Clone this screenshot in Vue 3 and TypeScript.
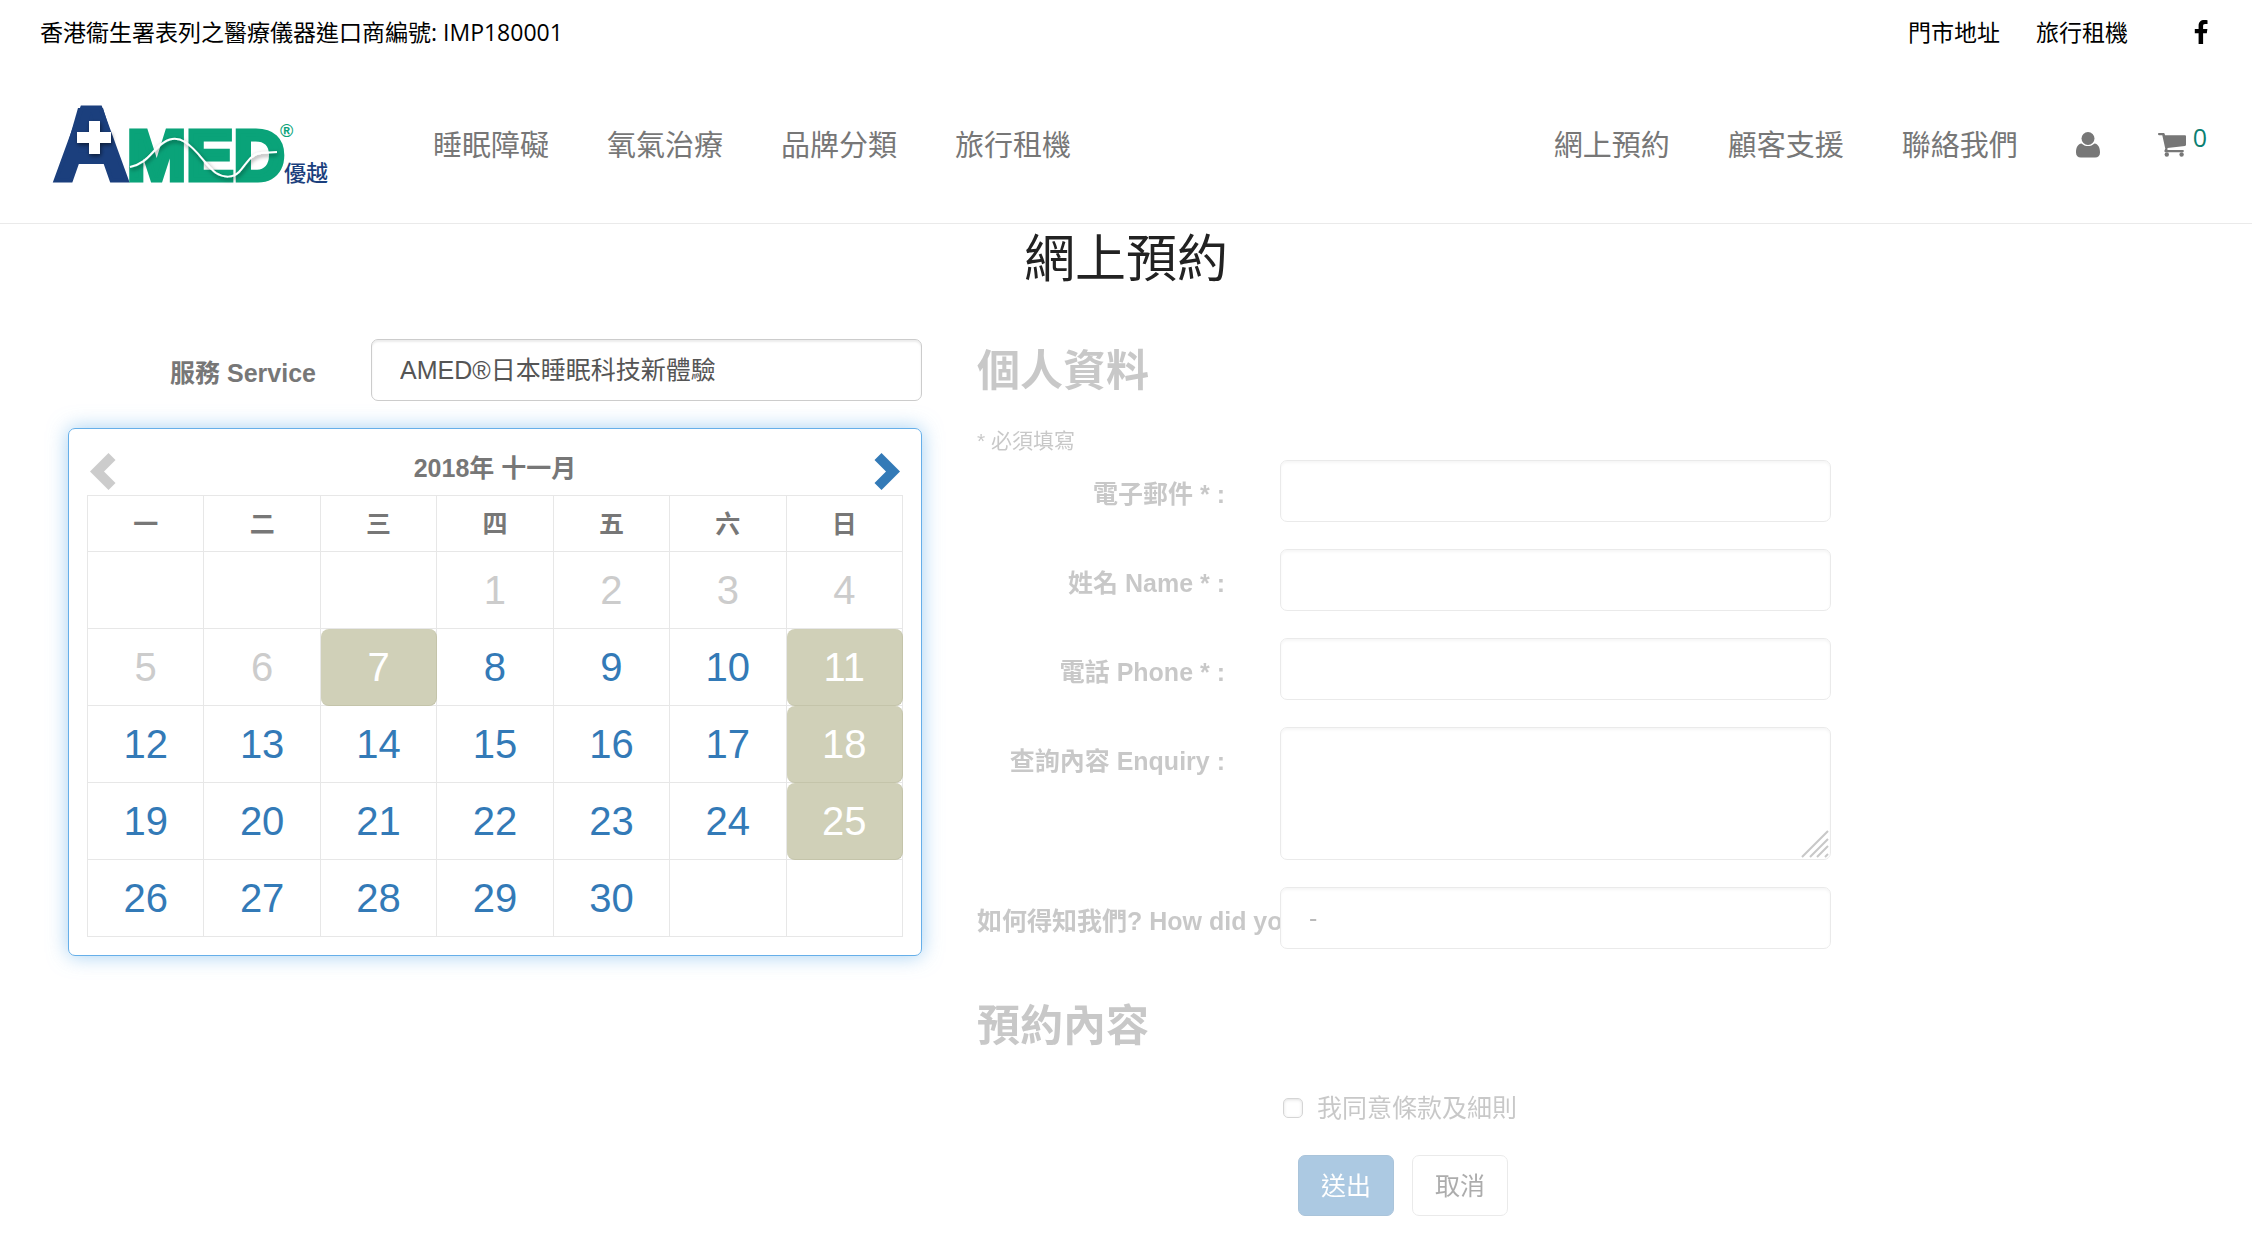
<script setup lang="ts">
import { ref } from 'vue'

interface Day {
  label: number
  state: 'past' | 'open' | 'closed'
}

const leftNav: string[] = ['睡眠障礙', '氧氣治療', '品牌分類', '旅行租機']
const rightNav: string[] = ['網上預約', '顧客支援', '聯絡我們']
const weekdays: string[] = ['一', '二', '三', '四', '五', '六', '日']

const firstOffset = 3
const daysInMonth = 30
const closedDays: number[] = [7, 11, 18, 25]

const weeks: (Day | null)[][] = Array.from({ length: 5 }, (_, week) =>
  Array.from({ length: 7 }, (_, column) => {
    const label = week * 7 + column - firstOffset + 1
    if (label < 1 || label > daysInMonth) return null
    if (closedDays.includes(label)) return { label, state: 'closed' }
    return { label, state: label < 7 ? 'past' : 'open' }
  }),
)

const service = ref('sleep')
const email = ref('')
const fullName = ref('')
const phone = ref('')
const enquiry = ref('')
const source = ref('-')
const agreed = ref(false)
</script>

<template>
  <div class="page" lang="zh-HK">
    <header class="header">
      <div class="topbar">
        <span>香港衞生署表列之醫療儀器進口商編號: IMP180001</span>
        <nav class="topbar-links">
          <a href="#">門市地址</a>
          <a href="#">旅行租機</a>
          <a href="#" class="facebook" aria-label="Facebook">
            <svg width="14" height="24" viewBox="0 0 14 24">
              <path d="M13.5 .2v3.9h-2.3c-1.8 0-2.1.9-2.1 2.1v2.7h4.3l-.6 4.3H9.100V24H4.600V13.200H.8V8.900h3.800V5.700C4.600 2 6.900 0 10.200 0c1.600 0 2.900.1 3.300.2z" />
            </svg>
          </a>
        </nav>
      </div>
      <div class="navbar">
        <a href="#" class="logo" aria-label="AMED 優越">
          <svg width="300" height="140" viewBox="50 75 300 140">
            <defs>
              <filter id="soft" x="-30%" y="-30%" width="170%" height="170%">
                <feDropShadow dx="1" dy="2" stdDeviation="2" flood-opacity="0.55" />
              </filter>
            </defs>
            <path d="M78 108h25l17 56H62z" fill="#1b3f7d" />
            <text class="logo-a" x="53" y="181">A</text>
            <text class="logo-med" x="127" y="180">MED</text>
            <path d="M89 121h11v11h11v11h-11v11H89v-11H77v-11h12z" fill="#fff" filter="url(#soft)" />
            <path
              d="M130 167c14-3 19-11 26-18 9-9 18-14 29-7 13 8 20 23 31 31 8 5 17 5 23-1 7-7 11-18 22-19l16-1"
              fill="none" stroke="#fff" stroke-width="2" filter="url(#soft)"
            />
            <text class="logo-reg" x="280" y="137">®</text>
            <text class="logo-zh" x="284" y="181">優越</text>
          </svg>
        </a>
        <nav class="menu">
          <a v-for="item in leftNav" :key="item" href="#">{{ item }}</a>
        </nav>
        <nav class="menu menu-right">
          <a v-for="item in rightNav" :key="item" href="#">{{ item }}</a>
          <a href="#" class="icon-link" aria-label="帳戶">
            <svg width="24" height="26" viewBox="0 0 24 26">
              <circle cx="12" cy="6.500" r="6.500" />
              <path d="M5.500 11.500c1.800 1.700 4 2.600 6.500 2.600s4.700-.9 6.500-2.600C22.500 12 24 16 24 20.500c0 3.300-2 5.100-4.800 5.100H4.800C2 25.600 0 23.800 0 20.500 0 16 1.500 12 5.500 11.500z" />
            </svg>
          </a>
          <a href="#" class="icon-link cart" aria-label="購物車">
            <svg width="28" height="24" viewBox="0 0 28 24">
              <path d="M1 0h4.500c.8 0 1.200.6 1.300 1.300L7 2.200h19.800c.7 0 1.200.5 1.200 1.100v8.500c0 .6-.4 1-1 1.100L9.400 15c.2.900.2 1.300-.1 2h15.500c1.400 0 1.400 2.200 0 2.200H7.600c-1.100 0-1.500-.9-1.100-1.700l.8-1.700L4.300 2.200H1C-.3 2.200-.3 0 1 0z" />
              <circle cx="8.800" cy="21.500" r="2.200" />
              <circle cx="23.600" cy="21.500" r="2.200" />
            </svg>
            <span class="count">0</span>
          </a>
        </nav>
      </div>
    </header>

    <h1>網上預約</h1>

    <main class="booking">
      <section class="schedule">
        <div class="field">
          <label for="service">服務 Service</label>
          <select id="service" v-model="service" class="control">
            <option value="sleep">AMED®日本睡眠科技新體驗</option>
          </select>
        </div>
        <div class="calendar">
          <div class="calendar-bar">
            <button type="button" class="prev" aria-label="上個月" disabled>
              <svg width="26" height="37" viewBox="0 0 26 37">
                <path d="M0 18.500 18.500 0l7 7L14 18.500l11.500 11.500-7 7z" />
              </svg>
            </button>
            <strong>2018年 十一月</strong>
            <button type="button" class="next" aria-label="下個月">
              <svg width="26" height="37" viewBox="0 0 26 37">
                <path d="M26 18.500 7.500 0l-7 7L12 18.500.5 30l7 7z" />
              </svg>
            </button>
          </div>
          <table>
            <thead>
              <tr>
                <th v-for="day in weekdays" :key="day" scope="col">{{ day }}</th>
              </tr>
            </thead>
            <tbody>
              <tr v-for="(week, w) in weeks" :key="w">
                <td v-for="(day, d) in week" :key="d">
                  <a v-if="day && day.state === 'open'" href="#" class="day">{{ day.label }}</a>
                  <span v-else-if="day" class="day" :class="day.state">{{ day.label }}</span>
                </td>
              </tr>
            </tbody>
          </table>
        </div>
      </section>

      <form class="details" @submit.prevent>
        <h2>個人資料</h2>
        <p class="note">* 必須填寫</p>
        <div class="field">
          <label for="email">電子郵件 * :</label>
          <input id="email" v-model="email" type="email" class="control" />
        </div>
        <div class="field">
          <label for="name">姓名 Name * :</label>
          <input id="name" v-model="fullName" type="text" class="control" />
        </div>
        <div class="field">
          <label for="phone">電話 Phone * :</label>
          <input id="phone" v-model="phone" type="tel" class="control" />
        </div>
        <div class="field">
          <label for="enquiry">查詢內容 Enquiry :</label>
          <div class="area">
            <textarea id="enquiry" v-model="enquiry" class="control"></textarea>
            <svg class="grip" width="28" height="28" viewBox="0 0 28 28">
              <path d="M1 27 27 1M9 27 27 9M16 27 27 16M24 27l3-3" />
            </svg>
          </div>
        </div>
        <div class="field">
          <label for="source">如何得知我們? How did you</label>
          <select id="source" v-model="source" class="control">
            <option value="-">-</option>
          </select>
        </div>
        <h2 class="summary-title">預約內容</h2>
        <div class="field">
          <div class="confirm">
            <label class="agree"><input v-model="agreed" type="checkbox" />我同意條款及細則</label>
            <div class="actions">
              <button type="submit" class="btn primary">送出</button>
              <button type="button" class="btn">取消</button>
            </div>
          </div>
        </div>
      </form>
    </main>
  </div>
</template>

<style>
body {
  margin: 0;
  background: #fff;
}
</style>

<style scoped>
.page,
.page * {
  box-sizing: border-box;
}

.page {
  font-family: "Liberation Sans", "Noto Sans CJK TC", sans-serif;
  font-size: 25px;
  line-height: 36px;
  color: #777;
}

a {
  color: inherit;
  text-decoration: none;
}

.header {
  font-family: "Open Sans", "Noto Sans CJK TC", sans-serif;
  border-bottom: 1px solid #eaeaea;
}

.topbar {
  display: flex;
  align-items: center;
  justify-content: space-between;
  height: 64px;
  padding: 0 44px 0 40px;
  font-size: 23px;
  color: #000;
}

.topbar-links {
  display: flex;
  align-items: center;
  gap: 36px;
}

.facebook {
  display: flex;
  margin-left: 30px;
}

.navbar {
  display: flex;
  align-items: center;
  height: 159px;
  padding: 2px 45px 0 50px;
  font-size: 29px;
}

.logo {
  display: flex;
  margin-right: 83px;
}

.logo-a {
  font: bold 106px "Liberation Sans", sans-serif;
  fill: #1b3f7d;
  stroke: #1b3f7d;
  stroke-width: 4px;
}

.logo-med {
  font: bold 71px "Liberation Sans", sans-serif;
  fill: #0aa379;
  stroke: #0aa379;
  stroke-width: 5px;
}

.logo-reg {
  font: bold 18px "Liberation Sans", sans-serif;
  fill: #0aa379;
}

.logo-zh {
  font: 500 22px "Noto Sans CJK TC", sans-serif;
  fill: #1b3f7d;
}

.menu {
  display: flex;
  align-items: center;
  gap: 58px;
}

.menu-right {
  margin-left: auto;
}

.icon-link {
  display: flex;
  fill: #777;
}

.cart {
  gap: 7px;
}

.count {
  margin-top: -8px;
  font-size: 25px;
  line-height: 24px;
  color: #0b7f72;
}

h1 {
  margin: 0;
  padding-top: 2px;
  font-size: 51px;
  line-height: 68px;
  font-weight: 400;
  text-align: center;
  color: #222;
}

.booking {
  display: grid;
  grid-template-columns: 854fr 854fr 366fr;
  gap: 55px;
  align-items: start;
  padding: 45px 0 44px 68px;
}

.field {
  display: grid;
  grid-template-columns: 248fr 551fr;
  gap: 55px;
  margin-bottom: 27px;
}

.field > label {
  min-width: 0;
  padding-top: 16px;
  font-weight: 700;
  text-align: right;
  white-space: nowrap;
}

.control {
  position: relative;
  display: block;
  width: 100%;
  min-width: 0;
  height: 62px;
  margin: 0;
  padding: 0 28px;
  border: 1px solid #ccc;
  border-radius: 7px;
  outline: 0;
  background: #fff;
  box-shadow: inset 0 2px 2px rgba(0, 0, 0, 0.075);
  font: inherit;
  color: #555;
  appearance: none;
}

.area {
  position: relative;
}

textarea.control {
  height: 133px;
  padding: 12px 28px;
  resize: none;
}

.grip {
  position: absolute;
  right: 2px;
  bottom: 2px;
  fill: none;
  stroke: #777;
  stroke-width: 2px;
}

.calendar {
  padding: 19px 18px 18px;
  border: 1px solid #66afe9;
  border-radius: 7px;
  box-shadow: 0 0 20px rgba(102, 175, 233, 0.6);
}

.calendar-bar {
  display: flex;
  justify-content: space-between;
  height: 47px;
}

.calendar-bar strong {
  padding-top: 2px;
}

.calendar-bar button {
  height: 37px;
  margin: 5px 3px 0;
  padding: 0;
  border: 0;
  background: none;
}

.prev {
  fill: #ccc;
}

.next {
  fill: #337ab7;
}

table {
  width: 100%;
  table-layout: fixed;
  border-spacing: 0;
  border: solid #e7e7e7;
  border-width: 1px 0 0 1px;
}

th,
td {
  height: 77px;
  padding: 0;
  border: solid #e7e7e7;
  border-width: 0 1px 1px 0;
  text-align: center;
}

th {
  height: 56px;
}

.day {
  display: block;
  height: 76px;
  font-size: 40px;
  line-height: 76px;
  color: #337ab7;
}

.past {
  color: #ccc;
}

.closed {
  height: 77px;
  margin: 0 -1px -1px 0;
  border: solid #c4c4aa;
  border-width: 0 1px 1px 0;
  border-radius: 8px;
  background: #d0d0b8;
  color: #fff;
}

.details {
  opacity: 0.4;
}

h2 {
  margin: 0;
  font-size: 43px;
  line-height: 64px;
  font-weight: 700;
}

.note {
  margin: 20px 0 1px;
  font-size: 21px;
}

.summary-title {
  margin: 45px 0 32px;
}

.confirm {
  grid-column: 2;
}

.agree {
  display: flex;
  align-items: center;
  gap: 14px;
  padding-left: 3px;
}

.agree input {
  width: 20px;
  height: 20px;
  margin: 0;
  border: 1px solid #999;
  border-radius: 5px;
  background: #fff;
  box-shadow: inset 0 1px 3px rgba(0, 0, 0, 0.3);
  appearance: none;
}

.agree input:checked {
  background: #337ab7;
}

.actions {
  display: flex;
  gap: 18px;
  padding: 29px 0 0 18px;
}

.btn {
  height: 61px;
  padding: 0 22px;
  border: 1px solid #ccc;
  border-radius: 7px;
  background: #fff;
  font: inherit;
  color: #333;
}

.primary {
  border-color: #2e6da4;
  background: #337ab7;
  color: #fff;
}
</style>
